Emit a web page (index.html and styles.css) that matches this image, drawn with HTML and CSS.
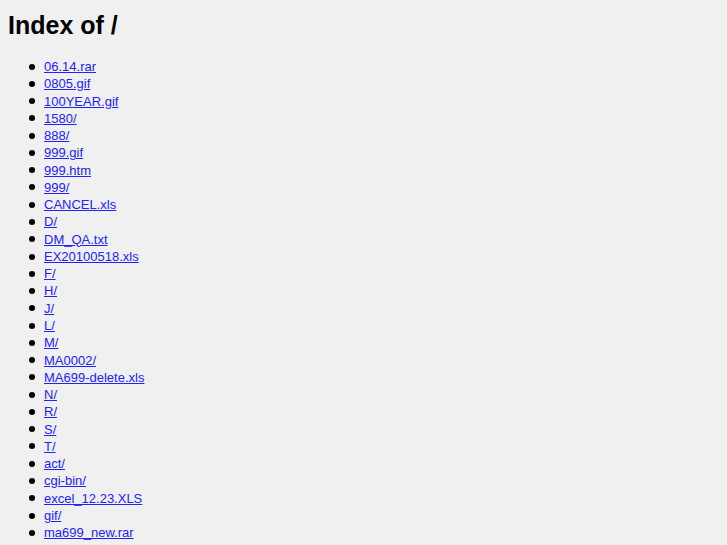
FILE: index.html
```html
<!DOCTYPE html>
<html>
<head>
<meta charset="utf-8">
<title>Index of /</title>
<link rel="stylesheet" href="styles.css">
</head>
<body>
<h1 class="title">Index of /</h1>
<ul class="listing">
<li><a href="#">06.14.rar</a></li>
<li><a href="#">0805.gif</a></li>
<li><a href="#">100YEAR.gif</a></li>
<li><a href="#">1580/</a></li>
<li><a href="#">888/</a></li>
<li><a href="#">999.gif</a></li>
<li><a href="#">999.htm</a></li>
<li><a href="#">999/</a></li>
<li><a href="#">CANCEL.xls</a></li>
<li><a href="#">D/</a></li>
<li><a href="#">DM_QA.txt</a></li>
<li><a href="#">EX20100518.xls</a></li>
<li><a href="#">F/</a></li>
<li><a href="#">H/</a></li>
<li><a href="#">J/</a></li>
<li><a href="#">L/</a></li>
<li><a href="#">M/</a></li>
<li><a href="#">MA0002/</a></li>
<li><a href="#">MA699-delete.xls</a></li>
<li><a href="#">N/</a></li>
<li><a href="#">R/</a></li>
<li><a href="#">S/</a></li>
<li><a href="#">T/</a></li>
<li><a href="#">act/</a></li>
<li><a href="#">cgi-bin/</a></li>
<li><a href="#">excel_12.23.XLS</a></li>
<li><a href="#">gif/</a></li>
<li><a href="#">ma699_new.rar</a></li>
<li><a href="#">ma699_old.rar</a></li>
</ul>
</body>
</html>
```
FILE: styles.css
```css
html {
  background: #f0f0f0;
}
body {
  margin: 8px;
  font-family: "Liberation Sans", Arial, sans-serif;
  color: #000;
}
.title {
  font-size: 25px;
  font-weight: bold;
  margin: 2px 0 18px 0;
  line-height: 30px;
}
.listing {
  margin: 0;
  padding-left: 36px;
  list-style: none;
  font-size: 13px;
  line-height: 17.26px;
}
.listing li {
  display: flex;
  align-items: center;
}
.listing li::before {
  content: "";
  width: 6px;
  height: 6px;
  border-radius: 50%;
  background: #000;
  margin-left: -15px;
  margin-right: 9px;
  flex: none;
}
.listing a {
  color: #2222ff;
}
```
